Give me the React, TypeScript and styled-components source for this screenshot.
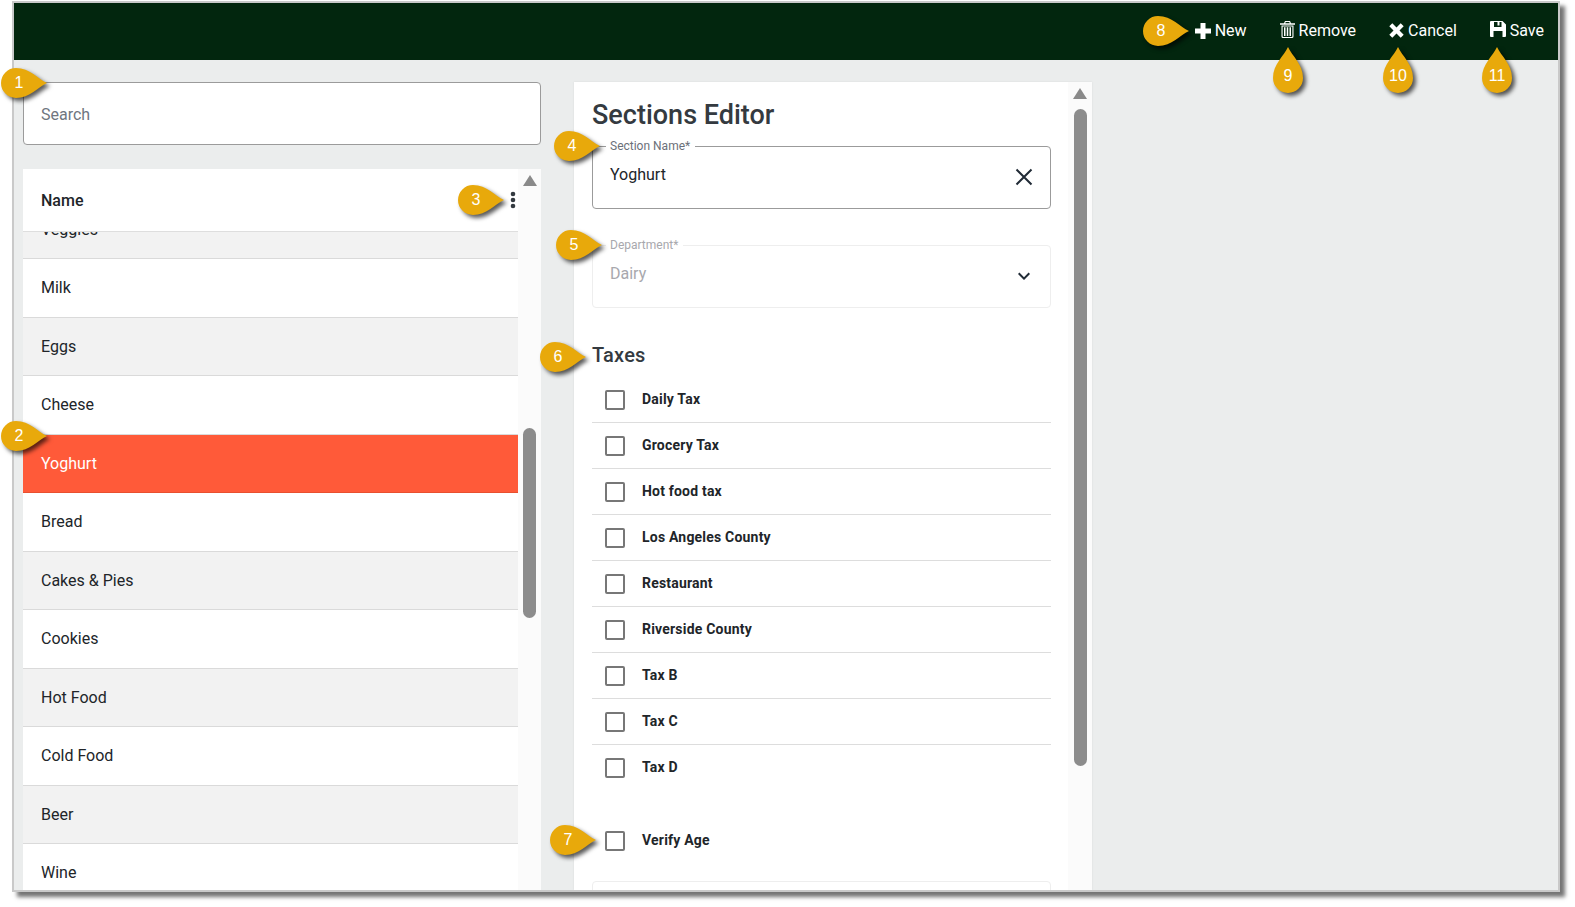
import React from 'react';
import styled, { createGlobalStyle } from 'styled-components';
import { MdKeyboardArrowDown } from 'react-icons/md';

const GlobalStyle = createGlobalStyle`
    html, body {
        margin: 0;
        padding: 0;
        background: #ffffff;
        overflow: hidden;
    }
    * {
        box-sizing: border-box;
    }
    body {
        font-family: Roboto, "Liberation Sans", sans-serif;
        color: #212529;
    }
`;

const Page = styled.div`
    position: relative;
    width: 1575px;
    height: 907px;
    padding: 1px 0 0 12px;
`;

const Frame = styled.div`
    width: 1548px;
    height: 891px;
    border: 2px solid #c9c9c9;
    background: #ebeded;
    box-shadow: 5px 5px 4px rgba(70, 70, 70, 0.75);
    display: flex;
    flex-direction: column;
    overflow: hidden;
`;

const Toolbar = styled.div`
    flex: 0 0 57px;
    background: #02260e;
    display: flex;
    justify-content: flex-end;
    align-items: center;
    gap: 33px;
    padding: 0 14px 2px 0;
`;

const ToolButton = styled.div<{ $lift?: number }>`
    display: flex;
    align-items: center;
    gap: 4px;
    color: #ffffff;
    font-size: 16px;
    svg {
        display: block;
        margin-top: ${(p) => -(p.$lift ?? 0)}px;
    }
`;

const Content = styled.div`
    flex: 1;
    min-height: 0;
    display: flex;
    align-items: stretch;
    gap: 33px;
    padding: 22px 0 0 9px;
`;

const LeftColumn = styled.div`
    width: 518px;
    display: flex;
    flex-direction: column;
    gap: 24px;
`;

const SearchBox = styled.div`
    flex: 0 0 63px;
    background: #ffffff;
    border: 1px solid #9b9b9b;
    border-radius: 4px;
    display: flex;
    align-items: center;
    padding: 2px 17px 0;
    color: #6f7680;
    font-size: 16px;
`;

const ListCard = styled.div`
    flex: 1;
    min-height: 0;
    display: flex;
`;

const ListBody = styled.div`
    flex: 1;
    min-width: 0;
    display: flex;
    flex-direction: column;
`;

const ListHeader = styled.div`
    position: relative;
    z-index: 1;
    flex: 0 0 63px;
    background: #ffffff;
    border-bottom: 1px solid #dedede;
    display: flex;
    align-items: center;
    justify-content: space-between;
    padding: 0 0 0 18px;
    font-size: 16px;
    font-weight: 500;
`;

const DotsIcon = styled.svg`
    width: 6px;
    height: 18px;
    margin-right: 2px;
    fill: #333a40;
`;

const ListRows = styled.div`
    flex: 1;
    min-height: 0;
    overflow: hidden;
`;

const ListRow = styled.div<{ $tone: 'plain' | 'shade' | 'active'; $clipped?: boolean }>`
    height: 58.5px;
    margin-top: ${(p) => (p.$clipped ? '-31.5px' : '0')};
    display: flex;
    align-items: center;
    padding: 0 18px;
    font-size: 16px;
    border-bottom: 1px solid ${(p) => (p.$tone === 'active' ? '#e8502f' : '#dadada')};
    color: ${(p) => (p.$tone === 'active' ? '#ffffff' : '#212529')};
    background: ${(p) =>
        p.$tone === 'active' ? '#ff5a39' : p.$tone === 'shade' ? '#f2f2f2' : '#ffffff'};
`;

const ScrollLane = styled.div<{ $width: number }>`
    flex: 0 0 ${(p) => p.$width}px;
    background: #fbfbfb;
    display: flex;
    flex-direction: column;
    align-items: center;
`;

const ScrollArrow = styled.div`
    margin-top: 6px;
    width: 0;
    height: 0;
    border-left: 7.5px solid transparent;
    border-right: 7.5px solid transparent;
    border-bottom: 11px solid #8a8a8a;
`;

const ScrollThumb = styled.div<{ $top: number; $height: number }>`
    width: 13px;
    height: ${(p) => p.$height}px;
    margin-top: ${(p) => p.$top}px;
    border-radius: 7px;
    background: #8c8c8c;
`;

const EditorCard = styled.div`
    width: 518px;
    display: flex;
    background: #ffffff;
    box-shadow: 0 0 2px rgba(0, 0, 0, 0.08);
`;

const EditorBody = styled.div`
    flex: 1;
    min-width: 0;
    overflow: hidden;
    padding: 0 17px 0 18px;
`;

const EditorTitle = styled.h1`
    margin: 15px 0 0;
    font-size: 27px;
    line-height: 36px;
    font-weight: 500;
    color: #343a40;
`;

const Field = styled.fieldset<{ $disabled?: boolean }>`
    margin: ${(p) => (p.$disabled ? '29px' : '6px')} 0 0;
    padding: 0 17px;
    height: 70px;
    min-width: 0;
    border: 1px solid ${(p) => (p.$disabled ? '#eeeeee' : '#9b9b9b')};
    border-radius: 4px;
    display: block;
`;

const FieldLegend = styled.legend<{ $disabled?: boolean }>`
    padding: 0 5px 0 4px;
    margin-left: -4px;
    font-size: 12px;
    line-height: 14px;
    color: ${(p) => (p.$disabled ? '#a8a8ad' : '#6b7079')};
`;

const FieldInner = styled.div<{ $disabled?: boolean }>`
    display: flex;
    align-items: flex-start;
    justify-content: space-between;
    font-size: 16px;
    color: ${(p) => (p.$disabled ? '#a8a8ad' : '#212529')};
`;

const FieldValue = styled.span`
    line-height: 20px;
    margin-top: 12px;
`;

const FieldIcon = styled.span`
    display: flex;
    margin-top: 12px;
    margin-right: -3px;
    color: #212b36;
`;

const SectionHeading = styled.h2`
    margin: 35px 0 0;
    font-size: 20px;
    line-height: 24px;
    font-weight: 500;
    letter-spacing: 0.2px;
    color: #343a40;
`;

const TaxList = styled.div`
    margin-top: 10px;
`;

const TaxRow = styled.div<{ $last?: boolean }>`
    height: 46px;
    display: flex;
    align-items: center;
    padding-left: 13px;
    gap: 17px;
    border-bottom: ${(p) => (p.$last ? 'none' : '1px solid #dddddd')};
`;

const CheckBox = styled.span`
    flex: 0 0 20px;
    height: 20px;
    border: 2px solid #777777;
    border-radius: 2px;
`;

const TaxLabel = styled.span`
    margin-bottom: 2px;
    font-size: 14px;
    font-weight: 700;
    letter-spacing: 0.2px;
    color: #212529;
`;

const VerifyRow = styled(TaxRow)`
    margin-top: 27px;
    border-bottom: none;
`;

const NextField = styled.div`
    margin-top: 17px;
    height: 40px;
    border: 1px solid #eeeeee;
    border-radius: 4px;
`;

const CalloutWrap = styled.div<{ $x: number; $y: number; $up?: boolean }>`
    position: absolute;
    z-index: 2;
    left: ${(p) => p.$x}px;
    top: ${(p) => p.$y}px;
    width: ${(p) => (p.$up ? 30 : 46)}px;
    height: ${(p) => (p.$up ? 46 : 30)}px;
    svg {
        display: block;
        overflow: visible;
        filter: drop-shadow(3px 3px 2px rgba(0, 0, 0, 0.65));
    }
`;

const CalloutNumber = styled.span<{ $up?: boolean }>`
    position: absolute;
    left: ${(p) => (p.$up ? 0 : 3)}px;
    top: ${(p) => (p.$up ? 14 : 0)}px;
    width: 30px;
    height: 30px;
    line-height: 30px;
    text-align: center;
    color: #ffffff;
    font-family: "Liberation Sans", Arial, sans-serif;
    font-size: 16px;
`;

function Callout({ n, x, y, up }: { n: number; x: number; y: number; up?: boolean }) {
    return (
        <CalloutWrap $x={x} $y={y} $up={up}>
            {up ? (
                <svg width="30" height="46" viewBox="0 0 30 46">
                    <path d="M15 0C19 9 30 17 30 31A15 15 0 0 1 0 31C0 17 11 9 15 0Z" fill="#e8a90b" />
                </svg>
            ) : (
                <svg width="46" height="30" viewBox="0 0 46 30">
                    <path d="M46 15C37 19 29 30 15 30A15 15 0 0 1 15 0C29 0 37 11 46 15Z" fill="#e8a90b" />
                </svg>
            )}
            <CalloutNumber $up={up}>{n}</CalloutNumber>
        </CalloutWrap>
    );
}

function PlusIcon() {
    return (
        <svg width="16" height="16" viewBox="0 0 16 16" fill="#ffffff">
            <path d="M5.5 0h5v5.500H16v5H10.500V16h-5V10.500H0v-5H5.500z" />
        </svg>
    );
}

function CrossIcon() {
    return (
        <svg width="15" height="15" viewBox="0 0 15 15" fill="#ffffff">
            <path d="M3.300 0.300 7.500 4.500 11.700 0.300 14.700 3.300 10.500 7.500 14.700 11.700 11.700 14.700 7.500 10.500 3.300 14.700 0.300 11.700 4.500 7.500 0.300 3.300z" />
        </svg>
    );
}

function TrashIcon() {
    return (
        <svg width="15" height="17" viewBox="0 0 15 17" fill="#ffffff">
            <path d="M5 0h5l1 2.200H15v1.600H0V2.200h4zM5.700 1.100 5.300 2.200h4.400l-.4-1.100z" fillRule="evenodd" />
            <path d="M1.500 4.500h12V15.500A1.500 1.500 0 0 1 12 17H3A1.500 1.500 0 0 1 1.500 15.500zM2.600 5.500V15.200q0 .7.7.7h8.400q.7 0 .7-.7V5.500z" fillRule="evenodd" />
            <path d="M4 6.300h1.500V15H4zM6.750 6.300h1.500V15h-1.500zM9.500 6.300H11V15H9.500z" />
        </svg>
    );
}

function SaveIcon() {
    return (
        <svg width="16" height="16" viewBox="0 0 16 16" fill="#ffffff">
            <path d="M1 0H12.500L16 3.500V15a1 1 0 0 1-1 1H1a1 1 0 0 1-1-1V1a1 1 0 0 1 1-1zM4 1V6H11.500V1H9.500V4.500H7.500V1zM3.500 10V16H12.500V10z" fillRule="evenodd" />
        </svg>
    );
}

function ClearIcon() {
    return (
        <svg width="24" height="24" viewBox="0 0 24 24" fill="none" stroke="currentColor" strokeWidth="2">
            <path d="M4.500 4.500 19.500 19.500M19.500 4.500 4.500 19.500" />
        </svg>
    );
}

const rows: { name: string; tone: 'plain' | 'shade' | 'active' }[] = [
    { name: 'Milk', tone: 'plain' },
    { name: 'Eggs', tone: 'shade' },
    { name: 'Cheese', tone: 'plain' },
    { name: 'Yoghurt', tone: 'active' },
    { name: 'Bread', tone: 'plain' },
    { name: 'Cakes & Pies', tone: 'shade' },
    { name: 'Cookies', tone: 'plain' },
    { name: 'Hot Food', tone: 'shade' },
    { name: 'Cold Food', tone: 'plain' },
    { name: 'Beer', tone: 'shade' },
    { name: 'Wine', tone: 'plain' },
];

const taxes = [
    'Daily Tax',
    'Grocery Tax',
    'Hot food tax',
    'Los Angeles County',
    'Restaurant',
    'Riverside County',
    'Tax B',
    'Tax C',
    'Tax D',
];

export default function App() {
    return (
        <Page>
            <GlobalStyle />
            <Frame>
                <Toolbar>
                    <ToolButton>
                        <PlusIcon />
                        New
                    </ToolButton>
                    <ToolButton $lift={3}>
                        <TrashIcon />
                        Remove
                    </ToolButton>
                    <ToolButton>
                        <CrossIcon />
                        Cancel
                    </ToolButton>
                    <ToolButton $lift={3}>
                        <SaveIcon />
                        Save
                    </ToolButton>
                </Toolbar>
                <Content>
                    <LeftColumn>
                        <SearchBox>Search</SearchBox>
                        <ListCard>
                            <ListBody>
                                <ListHeader>
                                    Name
                                    <DotsIcon viewBox="0 0 6 18">
                                        <circle cx="3" cy="3" r="2.3" />
                                        <circle cx="3" cy="9" r="2.3" />
                                        <circle cx="3" cy="15" r="2.3" />
                                    </DotsIcon>
                                </ListHeader>
                                <ListRows>
                                    <ListRow $tone="shade" $clipped>
                                        Veggies
                                    </ListRow>
                                    {rows.map((row) => (
                                        <ListRow key={row.name} $tone={row.tone}>
                                            {row.name}
                                        </ListRow>
                                    ))}
                                </ListRows>
                            </ListBody>
                            <ScrollLane $width={23}>
                                <ScrollArrow />
                                <ScrollThumb $top={242} $height={190} />
                            </ScrollLane>
                        </ListCard>
                    </LeftColumn>
                    <EditorCard>
                        <EditorBody>
                            <EditorTitle>Sections Editor</EditorTitle>
                            <Field>
                                <FieldLegend>Section Name*</FieldLegend>
                                <FieldInner>
                                    <FieldValue>Yoghurt</FieldValue>
                                    <FieldIcon>
                                        <ClearIcon />
                                    </FieldIcon>
                                </FieldInner>
                            </Field>
                            <Field $disabled>
                                <FieldLegend $disabled>Department*</FieldLegend>
                                <FieldInner $disabled>
                                    <FieldValue>Dairy</FieldValue>
                                    <FieldIcon>
                                        <MdKeyboardArrowDown size={24} />
                                    </FieldIcon>
                                </FieldInner>
                            </Field>
                            <SectionHeading>Taxes</SectionHeading>
                            <TaxList>
                                {taxes.map((tax, i) => (
                                    <TaxRow key={tax} $last={i === taxes.length - 1}>
                                        <CheckBox />
                                        <TaxLabel>{tax}</TaxLabel>
                                    </TaxRow>
                                ))}
                            </TaxList>
                            <VerifyRow $last>
                                <CheckBox />
                                <TaxLabel>Verify Age</TaxLabel>
                            </VerifyRow>
                            <NextField />
                        </EditorBody>
                        <ScrollLane $width={24}>
                            <ScrollArrow />
                            <ScrollThumb $top={10} $height={657} />
                        </ScrollLane>
                    </EditorCard>
                </Content>
            </Frame>
            <Callout n={1} x={1} y={68} />
            <Callout n={2} x={1} y={421} />
            <Callout n={3} x={458} y={185} />
            <Callout n={4} x={554} y={131} />
            <Callout n={5} x={556} y={230} />
            <Callout n={6} x={540} y={342} />
            <Callout n={7} x={550} y={825} />
            <Callout n={8} x={1143} y={16} />
            <Callout n={9} x={1273} y={47} up />
            <Callout n={10} x={1383} y={47} up />
            <Callout n={11} x={1482} y={47} up />
        </Page>
    );
}
